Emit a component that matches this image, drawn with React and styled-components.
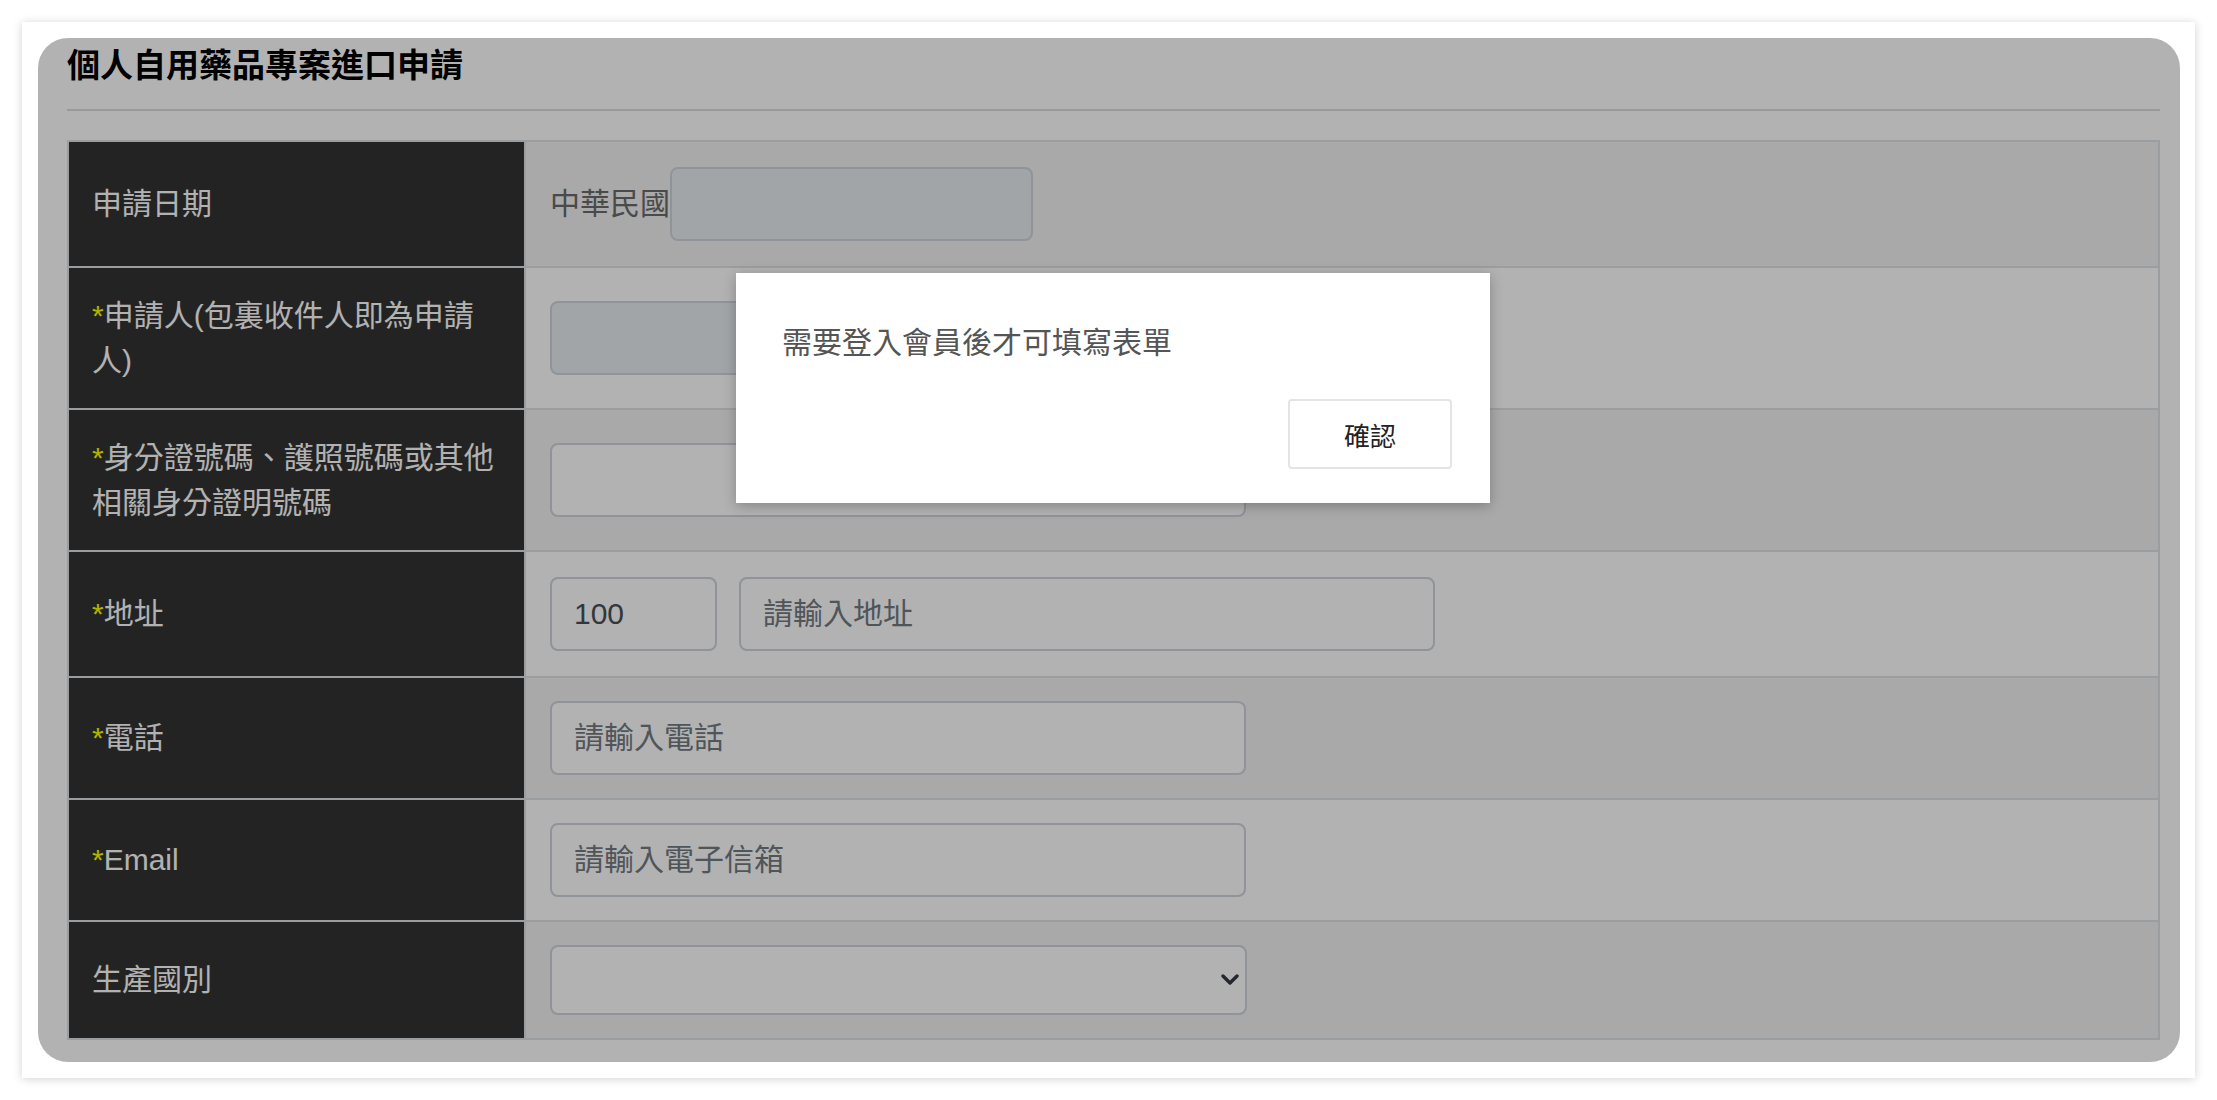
import React from "react";
import styled, { createGlobalStyle } from "styled-components";

const GlobalStyle = createGlobalStyle`
  html, body {
    margin: 0;
    padding: 0;
    background: #fff;
    overflow: hidden;
  }
  body {
    font-family: "Liberation Sans", "Noto Sans CJK TC", sans-serif;
    color: #212529;
  }
  * { box-sizing: border-box; }
`;

const Page = styled.div`
  height: 1100px;
  padding: 22px;
`;

const Card = styled.div`
  height: 100%;
  background: #fff;
  padding: 16px 15px 16px 16px;
  box-shadow: 0 1px 9px rgba(0, 0, 0, 0.18);
`;

const Panel = styled.section`
  position: relative;
  height: 100%;
  background: #fff;
  border-radius: 30px;
  overflow: hidden;
  padding: 8px 20px 22px 29px;
`;

const Title = styled.h1`
  margin: 0;
  font-size: 33px;
  line-height: 1.2;
  font-weight: 700;
  color: #000;
`;

const Rule = styled.hr`
  margin: 23px 0 29px;
  border: 0;
  border-top: 2px solid #dcdcdc;
`;

const FormTable = styled.div`
  display: grid;
  grid-template-columns: 457px 1fr;
  border-top: 2px solid #dee2e6;
  border-left: 2px solid #dee2e6;
`;

const LabelCell = styled.div`
  display: flex;
  align-items: center;
  background: #333;
  color: #fff;
  padding: ${(p) => (p.$tight ? "23px" : "25px")} 24px ${(p) => (p.$tight ? "23px" : "25px")} 23px;
  font-size: 30px;
  line-height: 1.5;
  border-right: 2px solid #dee2e6;
  border-bottom: 2px solid #dee2e6;
`;

const LabelText = styled.span`
  display: block;
`;

const Req = styled.span`
  color: #ffff00;
`;

const ValueCell = styled.div`
  display: flex;
  align-items: center;
  gap: ${(p) => p.$gap || 0}px;
  background: ${(p) => (p.$striped ? "#f2f2f2" : "#fff")};
  padding: ${(p) => (p.$tight ? "23px" : "25px")} 24px;
  font-size: 30px;
  line-height: 1.5;
  color: #6a6a6a;
  border-right: 2px solid #dee2e6;
  border-bottom: 2px solid #dee2e6;
`;

const Prefix = styled.span`
  white-space: nowrap;
`;

const TextInput = styled.input`
  width: ${(p) => p.$w}px;
  height: 74px;
  padding: 0 22px;
  border: 2px solid #ced4da;
  border-radius: 8px;
  background: ${(p) => (p.$locked ? "#e9ecef" : "#fff")};
  font-family: inherit;
  font-size: 30px;
  color: #495057;
  outline: none;
  &::placeholder {
    color: #737a82;
  }
`;

const SelectWrap = styled.div`
  position: relative;
  width: 697px;
`;

const Select = styled.select`
  width: 100%;
  height: 70px;
  padding: 0 22px;
  border: 2px solid #ced4da;
  border-radius: 8px;
  background: #fff;
  appearance: none;
  -webkit-appearance: none;
  font-family: inherit;
  font-size: 30px;
  color: #495057;
  outline: none;
`;

const Chevron = styled.svg`
  position: absolute;
  right: 8px;
  top: 50%;
  transform: translateY(-50%);
  pointer-events: none;
`;

const Overlay = styled.div`
  position: absolute;
  inset: 0;
  background: rgba(0, 0, 0, 0.3);
  z-index: 1;
`;

const Modal = styled.div`
  position: absolute;
  left: 698px;
  top: 235px;
  width: 754px;
  height: 230px;
  z-index: 2;
  background: #fff;
  box-shadow: 0 3px 12px rgba(0, 0, 0, 0.25);
  padding: 47px 38px 34px 46px;
  display: flex;
  flex-direction: column;
  justify-content: space-between;
`;

const Message = styled.p`
  margin: 0;
  font-size: 30px;
  line-height: 1.5;
  color: #555;
`;

const ButtonRow = styled.div`
  display: flex;
  justify-content: flex-end;
`;

const ConfirmButton = styled.button`
  width: 164px;
  height: 70px;
  background: #fff;
  border: 2px solid #e4e4e4;
  border-radius: 4px;
  font-family: inherit;
  font-size: 26px;
  color: #222;
  cursor: pointer;
`;

const rows = [
  {
    label: "申請日期",
    content: (
      <>
        <Prefix>中華民國</Prefix>
        <TextInput $w={363} $locked readOnly />
      </>
    ),
  },
  {
    req: true,
    label: "申請人(包裏收件人即為申請人)",
    content: <TextInput $w={696} $locked readOnly />,
  },
  {
    req: true,
    label: "身分證號碼、護照號碼或其他相關身分證明號碼",
    content: <TextInput $w={696} />,
  },
  {
    req: true,
    label: "地址",
    gap: 22,
    content: (
      <>
        <TextInput $w={167} defaultValue="100" />
        <TextInput $w={696} placeholder="請輸入地址" />
      </>
    ),
  },
  {
    req: true,
    tight: true,
    label: "電話",
    content: <TextInput $w={696} placeholder="請輸入電話" />,
  },
  {
    req: true,
    tight: true,
    label: "Email",
    content: <TextInput $w={696} placeholder="請輸入電子信箱" />,
  },
  {
    tight: true,
    label: "生產國別",
    content: (
      <SelectWrap>
        <Select defaultValue="">
          <option value=""></option>
        </Select>
        <Chevron width="18" height="12" viewBox="0 0 18 12">
          <polyline
            points="2,2 9,9 16,2"
            fill="none"
            stroke="#343a40"
            strokeWidth="3.4"
            strokeLinecap="round"
            strokeLinejoin="round"
          />
        </Chevron>
      </SelectWrap>
    ),
  },
];

export default function App() {
  return (
    <>
      <GlobalStyle />
      <Page>
        <Card>
          <Panel>
            <Title>個人自用藥品專案進口申請</Title>
            <Rule />
            <FormTable>
              {rows.map((r, i) => (
                <React.Fragment key={i}>
                  <LabelCell $tight={r.tight}>
                    <LabelText>
                      {r.req && <Req>*</Req>}
                      {r.label}
                    </LabelText>
                  </LabelCell>
                  <ValueCell $striped={i % 2 === 0} $gap={r.gap} $tight={r.tight}>
                    {r.content}
                  </ValueCell>
                </React.Fragment>
              ))}
            </FormTable>
            <Overlay />
            <Modal role="dialog">
              <Message>需要登入會員後才可填寫表單</Message>
              <ButtonRow>
                <ConfirmButton>確認</ConfirmButton>
              </ButtonRow>
            </Modal>
          </Panel>
        </Card>
      </Page>
    </>
  );
}
